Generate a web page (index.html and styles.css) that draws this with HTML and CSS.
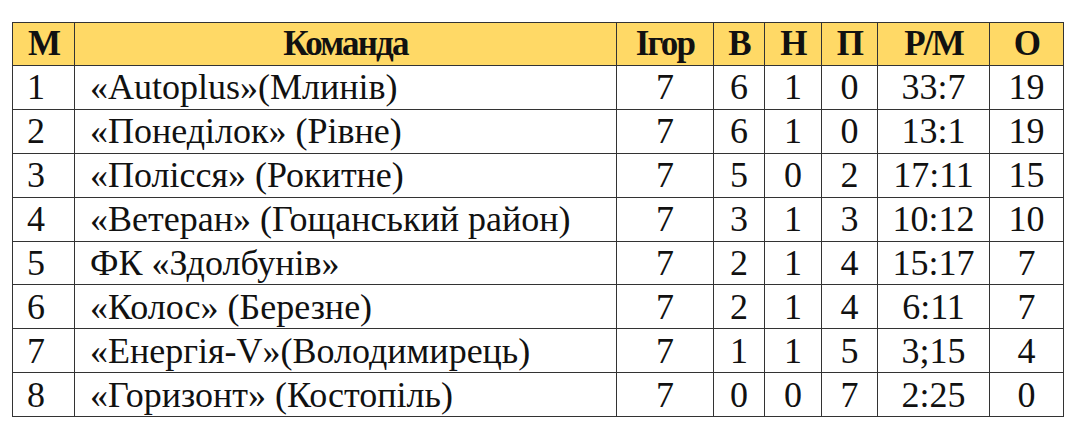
FILE: index.html
```html
<!DOCTYPE html>
<html>
<head>
<meta charset="utf-8">
<link rel="stylesheet" href="styles.css">
</head>
<body>
<table class="standings">
  <colgroup>
    <col class="c-pos"><col class="c-team"><col class="c-g"><col class="c-w"><col class="c-d"><col class="c-l"><col class="c-goals"><col class="c-pts">
  </colgroup>
  <thead>
    <tr><th>М</th><th>Команда</th><th>Ігор</th><th>В</th><th>Н</th><th>П</th><th>Р/М</th><th>О</th></tr>
  </thead>
  <tbody>
    <tr><td class="pos">1</td><td class="team">«Autoplus»(Млинів)</td><td>7</td><td>6</td><td>1</td><td>0</td><td>33:7</td><td>19</td></tr>
    <tr><td class="pos">2</td><td class="team">«Понеділок» (Рівне)</td><td>7</td><td>6</td><td>1</td><td>0</td><td>13:1</td><td>19</td></tr>
    <tr><td class="pos">3</td><td class="team">«Полісся» (Рокитне)</td><td>7</td><td>5</td><td>0</td><td>2</td><td>17:11</td><td>15</td></tr>
    <tr><td class="pos">4</td><td class="team">«Ветеран» (Гощанський район)</td><td>7</td><td>3</td><td>1</td><td>3</td><td>10:12</td><td>10</td></tr>
    <tr><td class="pos">5</td><td class="team">ФК «Здолбунів»</td><td>7</td><td>2</td><td>1</td><td>4</td><td>15:17</td><td>7</td></tr>
    <tr><td class="pos">6</td><td class="team">«Колос» (Березне)</td><td>7</td><td>2</td><td>1</td><td>4</td><td>6:11</td><td>7</td></tr>
    <tr><td class="pos">7</td><td class="team">«Енергія-V»(Володимирець)</td><td>7</td><td>1</td><td>1</td><td>5</td><td>3;15</td><td>4</td></tr>
    <tr><td class="pos">8</td><td class="team">«Горизонт» (Костопіль)</td><td>7</td><td>0</td><td>0</td><td>7</td><td>2:25</td><td>0</td></tr>
  </tbody>
</table>
</body>
</html>
```
FILE: styles.css
```css
html, body {
  margin: 0;
  padding: 0;
  background: #ffffff;
}
body {
  padding: 22px 0 0 12px;
}
.standings {
  border-collapse: collapse;
  table-layout: fixed;
  width: 1051px;
  font-family: "Liberation Serif", serif;
  color: #111;
}
.c-pos { width: 62px; }
.c-team { width: 542px; }
.c-g { width: 97px; }
.c-w { width: 51px; }
.c-d { width: 57px; }
.c-l { width: 56px; }
.c-goals { width: 112px; }
.c-pts { width: 74px; }
.standings th,
.standings td {
  border: 1.5px solid #333333;
  padding: 0;
  text-align: center;
  vertical-align: middle;
  white-space: nowrap;
  overflow: hidden;
  font-family: "Liberation Serif", serif;
}
.standings thead tr { height: 43px; }
.standings tbody tr { height: 43.875px; }
.standings th {
  background: #ffd966;
  font-weight: bold;
  font-size: 35px;
  letter-spacing: -1.8px;
  line-height: 40px;
}
.standings td {
  font-size: 36px;
  line-height: 40px;
}
.standings td.pos {
  text-align: left;
  padding-left: 14px;
}
.standings td.team {
  text-align: left;
  padding-left: 15px;
}
```
